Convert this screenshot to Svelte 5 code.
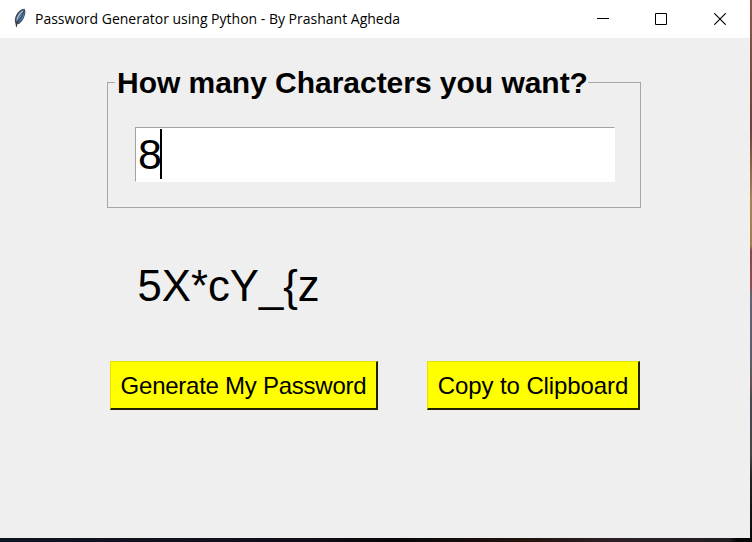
<script>
  let count = $state('8');
  let password = $state('5X*cY_{z');
</script>

<div class="desktop">
  <main class="window">
    <header>
      <svg class="feather" width="14" height="21" viewBox="0 0 14 21" aria-hidden="true">
        <path d="M11.5 .8C8 1 5 3.7 3 7.5C1.7 10 1.5 12.7 2.4 15.5L3.3 19.5L4.3 16.3C7 16 9.2 13.5 10.7 10.3C12.2 7 13.1 3 11.5 .8Z" fill="#3d4a5a" />
        <path d="M10.5 2C7.5 3.4 4.6 6.8 3.6 10.2L3.5 13.7C7.2 10.7 9.3 6.3 10.5 2Z" fill="#9dbbd8" />
        <path d="M11.6 2.4C10.4 7.4 7.8 11.7 4.5 14.8C7.8 14 9.9 10.7 10.9 8Z" fill="#3d82cc" />
        <path d="M9.5 4.5C7 7.5 4.2 12 3.3 19" fill="none" stroke="#27343f" stroke-width=".8" />
      </svg>
      <h1>Password Generator using Python - By Prashant Agheda</h1>
      <div class="controls">
        <svg width="12" height="12" viewBox="0 0 12 12"><path d="M0 5.5H12" stroke="#000" /></svg>
        <svg width="12" height="12" viewBox="0 0 12 12"><path d="M.5 .5H11.5V11.5H.5Z" fill="none" stroke="#000" /></svg>
        <svg width="12" height="12" viewBox="0 0 12 12"><path d="M.3 .3L11.7 11.7M11.7 .3L.3 11.7" stroke="#000" stroke-width="1.15" /></svg>
      </div>
    </header>
    <section class="content">
      <fieldset>
        <legend>How many Characters you want?</legend>
        <div class="entry"><span>{count}</span><i class="caret"></i></div>
      </fieldset>
      <output>{password}</output>
      <div class="actions">
        <button class="generate">Generate My Password</button>
        <button class="copy">Copy to Clipboard</button>
      </div>
    </section>
  </main>
  <div class="edge"></div>
</div>

<style>
  .desktop {
    width: 752px;
    height: 542px;
    overflow: hidden;
    display: grid;
    grid-template-columns: 750px 2px;
    grid-template-rows: 538px 4px;
    background: linear-gradient(90deg, #0d1422, #120e18 40%, #08060a 52%, #21130e 70%, #2b2127 82%, #211d23 97%, #050506 98%);
    font-family: "Liberation Sans", Arial, sans-serif;
    color: #000;
  }
  .window { background: #efefef; }
  .edge {
    background: linear-gradient(180deg, #8c5549 0, #70403a 130px, #ad8154 200px, #a77a4c 246px, #84494a 250px, #8c4d4c 285px, #626575 296px, #5b5c66 365px, #66504f 385px, #454951 400px, #45454b 455px, #252529 475px, #08080a 538px);
  }
  header {
    height: 38px;
    background: #fff;
    display: flex;
    align-items: center;
    box-sizing: border-box;
    padding: 0 24px 0 13px;
  }
  .feather { margin-top: -2px; }
  h1 {
    margin: 0 0 0 8px;
    font: 400 14px/20px "Open Sans", "Noto Sans", sans-serif;
    letter-spacing: 0;
    white-space: nowrap;
  }
  .controls { display: flex; gap: 46px; margin-left: auto; }
  .controls svg { display: block; }
  .controls svg:last-child { margin-left: 1px; }
  .content { padding: 27px 109px 0 107px; }
  fieldset {
    box-sizing: border-box;
    width: 534px;
    height: 143px;
    margin: 0;
    padding: 27px 25px 0 27px;
    border: 1px solid #a6a6a6;
    min-width: 0;
  }
  legend {
    margin-left: -20px;
    padding: 0 0 0 2px;
    font-weight: 700;
    font-size: 30px;
    line-height: 35px;
    letter-spacing: -.03px;
    white-space: nowrap;
  }
  .entry {
    height: 55px;
    box-sizing: border-box;
    border: 1px solid #fff;
    border-top-color: #a3a3a3;
    border-left-color: #a3a3a3;
    background: #fff;
    display: flex;
    align-items: flex-start;
    padding: 1px 0 0 2px;
    font-size: 43px;
    line-height: 51px;
  }
  .caret { width: 2px; height: 50px; margin-left: -2px; background: #000; }
  output {
    display: block;
    margin: 53px 0 0 30.5px;
    font-size: 43.7px;
    line-height: 50px;
  }
  .actions { display: flex; justify-content: space-between; margin: 50px 1px 0 3px; }
  button {
    height: 49px;
    box-sizing: border-box;
    padding: 2px 0 0;
    border: 1px solid #e2e200;
    border-right: 2px solid #222200;
    border-bottom: 2px solid #222200;
    background: #ff0;
    color: #000;
    font: 24px/44px "Liberation Sans", Arial, sans-serif;
    white-space: nowrap;
  }
  .generate { width: 268px; letter-spacing: -.25px; }
  .copy { width: 213px; letter-spacing: -.1px; }
</style>
